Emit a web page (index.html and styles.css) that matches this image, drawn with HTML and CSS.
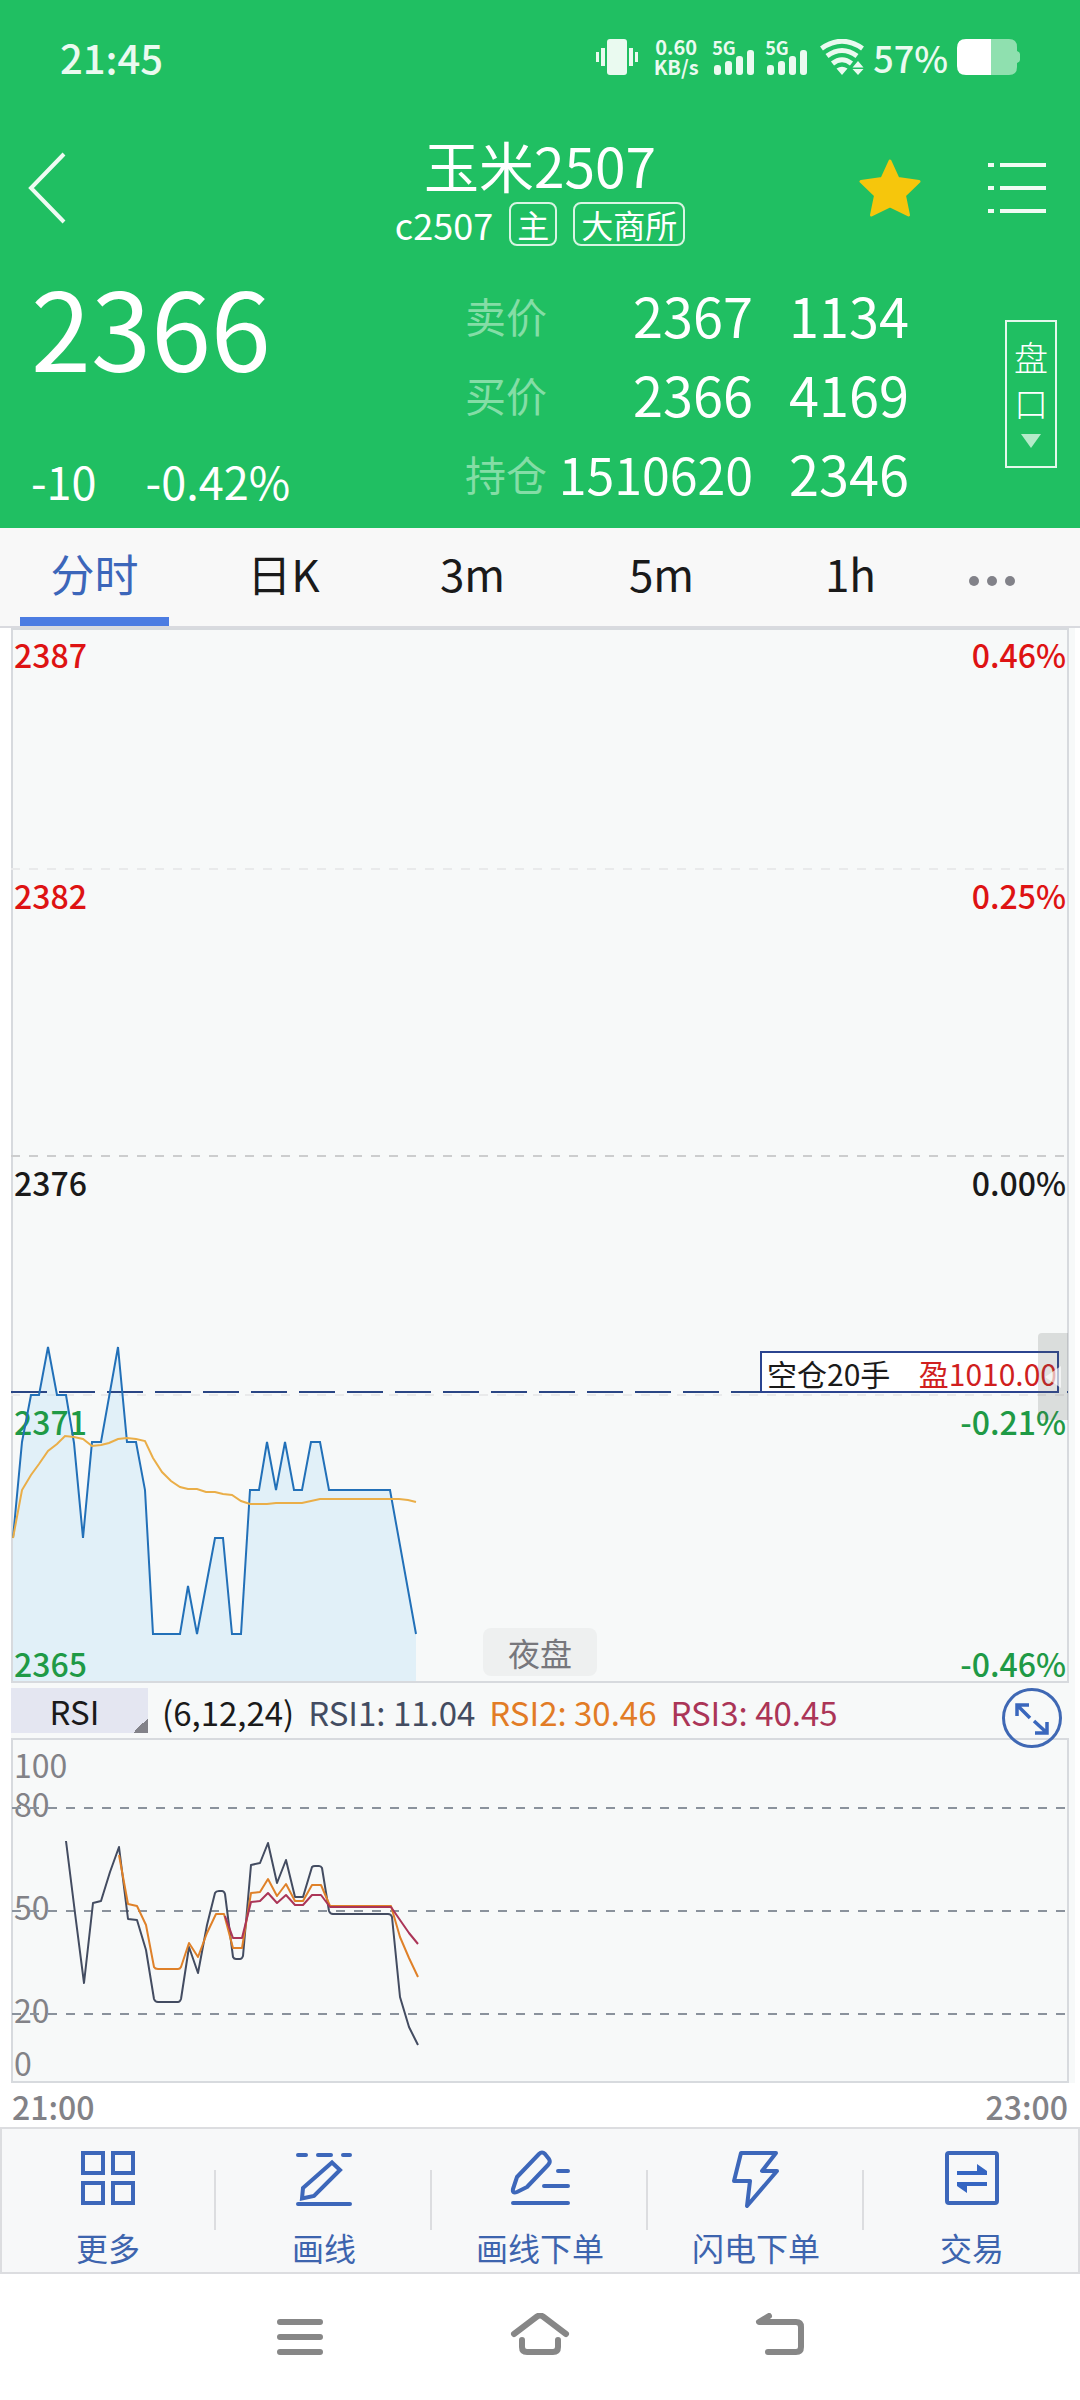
FILE: index.html
```html
<!DOCTYPE html>
<html lang="zh-CN">
<head>
<meta charset="utf-8">
<meta name="viewport" content="width=device-width, initial-scale=1">
<title>玉米2507</title>
<link rel="stylesheet" href="styles.css">
</head>
<body>
<header class="header">
  <div class="status">
    <span class="status-time">21:45</span>
    <svg class="vibrate" width="42" height="36" viewBox="0 0 42 36"><g fill="#eafaf0"><rect x="11" y="0" width="20" height="36" rx="3"/><rect x="0" y="13" width="3" height="10"/><rect x="5" y="9" width="4" height="18"/><rect x="33" y="9" width="4" height="18"/><rect x="39" y="13" width="3" height="10"/></g></svg>
    <span class="speed"><span>0.60</span><span>KB/s</span></span>
    <span class="cell"><span>5G</span><svg width="40" height="25" viewBox="0 0 40 25"><g fill="#eafaf0"><rect x="0" y="15" width="7" height="10" rx="3"/><rect x="11" y="11" width="7" height="14" rx="3"/><rect x="22" y="6" width="7" height="19" rx="3"/><rect x="33" y="0" width="7" height="25" rx="3"/></g></svg></span>
    <span class="cell"><span>5G</span><svg width="40" height="25" viewBox="0 0 40 25"><g fill="#eafaf0"><rect x="0" y="15" width="7" height="10" rx="3"/><rect x="11" y="11" width="7" height="14" rx="3"/><rect x="22" y="6" width="7" height="19" rx="3"/><rect x="33" y="0" width="7" height="25" rx="3"/></g></svg></span>
    <svg class="wifi" width="44" height="36" viewBox="0 0 44 36"><g fill="none" stroke="#eafaf0" stroke-width="5"><path d="M1.500 9.500Q22-5 42.500 9.500"/><path d="M7 17Q22 6 37 17"/><path d="M12.500 24.500Q22 17 31.500 24.500"/></g><path fill="#eafaf0" d="M16.500 29.500Q22 26 27.500 29.500L22 36zM38 22l5.500 6.500h-11zM38 36l5.500-6h-11z"/></svg>
    <span class="battery-text">57%</span>
    <svg class="battery" width="63" height="36" viewBox="0 0 63 36"><path fill="#8fe0af" d="M33 0h19q8 0 8 8v4q3 1 3 3v6q0 2-3 3v4q0 8-8 8H33z"/><path fill="#fff" d="M34 0H9Q0 0 0 9v18q0 9 9 9h25z"/></svg>
  </div>
  <div class="titlebar">
    <button class="icon-btn back" aria-label="返回"><svg width="40" height="72" viewBox="0 0 40 72"><path d="M37 2L4 36L37 70" fill="none" stroke="#effbf3" stroke-width="4"/></svg></button>
    <div class="titles">
      <h1>玉米2507</h1>
      <div class="subtitle"><span>c2507</span><span class="tag">主</span><span class="tag">大商所</span></div>
    </div>
    <div class="title-actions">
      <button class="icon-btn" aria-label="自选"><svg width="62" height="60" viewBox="0 0 62 60"><path fill="#f6c60c" stroke="#f6c60c" stroke-width="3" stroke-linejoin="round" d="M31 3L39 20.500L60 23.500L45.500 37.500L49.500 57L31 48L12.500 57L16.500 37.500L2 23.500L23 20.500z"/></svg></button>
      <button class="icon-btn" aria-label="列表"><svg width="58" height="52" viewBox="0 0 58 52"><path d="M0 3h6M12 3h46M0 26h6M12 26h46M0 49h6M12 49h46" stroke="#effbf3" stroke-width="4"/></svg></button>
    </div>
  </div>
  <div class="quote">
    <div class="last">
      <div class="last-price">2366</div>
      <div class="change"><span>-10</span><span>-0.42%</span></div>
    </div>
    <table class="book">
      <tr><th scope="row">卖价</th><td class="price">2367</td><td>1134</td></tr>
      <tr><th scope="row">买价</th><td class="price">2366</td><td>4169</td></tr>
      <tr><th scope="row">持仓</th><td class="price long">1510620</td><td>2346</td></tr>
    </table>
    <button class="depth"><span>盘</span><span>口</span><svg width="20" height="14" viewBox="0 0 20 14"><path d="M0 0h20L10 14z" fill="#b4ebc9"/></svg></button>
  </div>
</header>

<nav class="tabs">
  <button class="tab active">分时</button>
  <button class="tab">日K</button>
  <button class="tab">3m</button>
  <button class="tab">5m</button>
  <button class="tab">1h</button>
  <button class="tab more" aria-label="更多周期"><svg width="46" height="10" viewBox="0 0 46 10"><g fill="#828289"><circle cx="5" cy="5" r="5"/><circle cx="23" cy="5" r="5"/><circle cx="41" cy="5" r="5"/></g></svg></button>
</nav>

<main class="charts">
  <section class="plot price-plot">
    <svg class="lines" viewBox="0 0 1058 1055" preserveAspectRatio="none">
      <g fill="none" stroke-width="2" stroke-dasharray="9 9">
        <path stroke="#e9eaeb" d="M0 241H1056M0 767H1056"/>
        <path stroke="#cccdce" d="M0 528H1056"/>
      </g>
      <path fill="#b5dcf6" fill-opacity=".32" d="M2 910L11 814L20 767H28L37 719L46 767H55L63 815L72 910L81 814H90L107 719L116 814H125L134 862L142 1006H169L177 958L186 1006L204 910H212L221 1006H230L239 862H248L256 814L265 862L274 814L283 862H291L300 814H309L318 862H379L405 1006V1053H2z"/>
    </svg>
    <div class="levels price-levels">
      <div class="level up"><span>2387</span><span>0.46%</span></div>
      <div class="level up"><span>2382</span><span>0.25%</span></div>
      <div class="level"><span>2376</span><span>0.00%</span></div>
      <div class="level down"><span>2371</span><span>-0.21%</span></div>
      <div class="level down"><span>2365</span><span>-0.46%</span></div>
    </div>
    <svg class="lines" viewBox="0 0 1058 1055" preserveAspectRatio="none">
      <path stroke="#2a4685" stroke-width="2" stroke-dasharray="36 12" d="M0 764H1057"/>
      <path fill="none" stroke="#2270b8" stroke-width="2" d="M2 910L11 814L20 767H28L37 719L46 767H55L63 815L72 910L81 814H90L107 719L116 814H125L134 862L142 1006H169L177 958L186 1006L204 910H212L221 1006H230L239 862H248L256 814L265 862L274 814L283 862H291L300 814H309L318 862H379L405 1006"/>
      <path fill="none" stroke="#eaae48" stroke-width="2" d="M2 910L11 862L20 847L28 836L37 823L46 816L54 808L63 809L72 811L81 818L90 817L98 815L107 811L116 810L125 811L134 813L142 830L151 844L160 853L169 859L177 861H186L195 864H204L212 866L221 867L230 873L239 876H256L265 875H291L309 871H388L397 872L405 874"/>
    </svg>
    <div class="position"><span>空仓20手</span><span class="profit">盈1010.00</span></div>
    <button class="drawer" aria-label="展开"><svg width="16" height="22" viewBox="0 0 16 22"><path d="M16 0v22L0 11z" fill="#fff" fill-opacity=".65"/></svg></button>
    <span class="session">夜盘</span>
  </section>
  <div class="indicator">
    <button class="indicator-name">RSI</button>
    <span>(6,12,24)</span>
    <span class="rsi1">RSI1: 11.04</span>
    <span class="rsi2">RSI2: 30.46</span>
    <span class="rsi3">RSI3: 40.45</span>
    <button class="expand" aria-label="全屏"><svg width="60" height="60" viewBox="0 0 60 60"><circle cx="30" cy="30" r="28.500" fill="none" stroke="#3f68b4" stroke-width="3"/><g fill="none" stroke="#3a67bd" stroke-width="3.500"><path d="M15 28V17H27M16 18L28 30"/><path d="M45 34V45H33M44 44L32 33"/></g></svg></button>
  </div>
  <section class="plot rsi-plot">
    <div class="levels rsi-levels"><span>100</span><span>80</span><span>50</span><span>20</span><span>0</span></div>
    <svg class="lines" viewBox="0 0 1058 345" preserveAspectRatio="none">
      <path stroke="#8a929c" stroke-width="2" stroke-dasharray="9 9" d="M1 70H1055M1 173H1055M1 276H1055"/>
      <g fill="none" stroke-width="2" stroke-linejoin="round">
        <path stroke="#434c61" d="M55 103L64 175L73 245L82 165L90 163L99 134L108 109L117 181L126 182L135 212L143 261Q144 264 147 264H167Q169 264 170 261L178 209L187 235L196 187L204 155Q205 153 208 153H211Q213 153 214 156L222 219Q223 221 225 221H229Q231 221 232 218L240 127L249 125L257 105L266 145L275 122L284 159H292L301 129Q302 128 304 128H308Q310 128 311 130L318 173Q319 176 322 176H377Q380 176 381 179L389 259L398 289L407 307"/>
        <path stroke="#df8129" d="M108 117L117 166L126 168L135 187L143 229Q144 231 147 231H167Q169 231 170 229L178 205L187 219L196 195L205 176H213L222 210H231L240 155L249 154L257 141L266 158L275 146L284 163H292L301 147H310L319 168H380L389 199L398 220L407 239"/>
        <path stroke="#ab3557" d="M214 178L222 200H231L240 164L249 163L257 155L266 165L275 157L284 167H292L301 157H310L319 169H380L389 182L398 195L407 206"/>
      </g>
    </svg>
  </section>
</main>
<div class="times"><span>21:00</span><span>23:00</span></div>

<nav class="toolbar">
  <button class="tool"><svg width="56" height="60" viewBox="0 0 56 60"><path fill="none" stroke="#3d67ba" stroke-width="4" d="M3 5h20v20H3zM33 5h20v20H33zM3 35h20v20H3zM33 35h20v20H33z"/></svg>更多</button>
  <button class="tool"><svg width="60" height="60" viewBox="0 0 60 60"><g fill="none" stroke="#3d67ba" stroke-width="4"><path stroke-linecap="round" d="M4 7h8M24 7h13M49 7h7M4 56h52"/><path d="M38 14.500L46 22L20 48L8 50.500L9 40z"/></g></svg>画线</button>
  <button class="tool"><svg width="60" height="60" viewBox="0 0 60 60"><g fill="none" stroke="#3d67ba" stroke-width="4" stroke-linecap="round" stroke-linejoin="round"><path d="M29 6Q32 3 35 6L39 11Q41 14 38 17L17 39L7 44Q2 46 3 41L7 29z"/><path d="M48 23h10M34 38h24M3 55h55"/></g></svg>画线下单</button>
  <button class="tool"><svg width="60" height="60" viewBox="0 0 60 60"><path fill="none" stroke="#3d67ba" stroke-width="4" stroke-linejoin="round" d="M15 5H50L36 23H51L21 58L24 33H8z"/></svg>闪电下单</button>
  <button class="tool"><svg width="56" height="60" viewBox="0 0 56 60"><rect x="3" y="5" width="50" height="50" rx="2" fill="none" stroke="#3d67ba" stroke-width="4"/><path fill="#3666c2" d="M13 23h20v-7l10 7v4H13zM43 38H23v7l-10-7v-4h30z"/></svg>交易</button>
</nav>

<nav class="sysnav">
  <button class="icon-btn" aria-label="最近任务"><svg width="60" height="48" viewBox="0 0 60 48"><path d="M10 9h40M10 24h40M10 39h40" stroke="#878787" stroke-width="6" stroke-linecap="round"/></svg></button>
  <button class="icon-btn" aria-label="主页"><svg width="60" height="48" viewBox="0 0 60 48"><path d="M4 21L27 3.500Q30 1.500 33 3.500L56 21M12 27v7q0 5 5 5h26q5 0 5-5v-7" fill="none" stroke="#878787" stroke-width="6" stroke-linecap="round"/></svg></button>
  <button class="icon-btn" aria-label="返回"><svg width="60" height="48" viewBox="0 0 60 48"><path d="M19 3L9 9H46q5 0 5 5v20q0 5-5 5H18" fill="none" stroke="#878787" stroke-width="6" stroke-linecap="round" stroke-linejoin="round"/></svg></button>
</nav>
</body>
</html>
```
FILE: styles.css
```css
* { box-sizing: border-box; }
body {
  margin: 0;
  background: #fff;
  color: #1a1a1a;
  font-family: "Noto Sans CJK SC", "Noto Sans", sans-serif;
}
button {
  margin: 0;
  padding: 0;
  border: 0;
  background: none;
  color: inherit;
  font: inherit;
}
svg { display: block; flex: none; }

.header {
  height: 528px;
  background: #20bf62;
  color: #fff;
}
.status {
  display: flex;
  align-items: center;
  height: 76px;
  margin-right: 60px;
  padding: 38px 0 0 60px;
  color: #eafaf0;
  font-weight: 500;
  line-height: 36px;
}
.status-time { margin-right: auto; font-size: 40px; }
.speed {
  display: flex;
  flex-direction: column;
  align-items: center;
  width: 48px;
  margin: 0 14px;
  font-size: 20px;
  font-weight: 700;
  line-height: 20px;
}
.cell {
  position: relative;
  display: flex;
  align-items: flex-end;
  height: 36px;
  margin-right: 13px;
}
.cell span {
  position: absolute;
  left: -2px;
  top: 0;
  font-size: 18px;
  font-weight: 700;
  line-height: 16px;
}
.battery-text { margin: 0 9px; font-size: 36px; }

.titlebar {
  display: grid;
  grid-template-columns: 1fr auto 1fr;
  align-items: center;
  margin-top: 53px;
  padding: 0 27px;
}
.icon-btn { display: block; }
.titles { text-align: center; }
h1 {
  margin: 0;
  font-size: 55px;
  font-weight: 400;
  line-height: 70px;
}
.subtitle {
  display: flex;
  justify-content: center;
  gap: 16px;
  margin-top: 3px;
  font-size: 36px;
  line-height: 44px;
}
.tag {
  padding: 0 6px;
  border: 2px solid #d8f5e3;
  border-radius: 8px;
  font-size: 32px;
  line-height: 40px;
}
.title-actions {
  display: flex;
  justify-content: flex-end;
  align-items: center;
  gap: 67px;
  padding-right: 7px;
}

.quote {
  display: flex;
  align-items: flex-start;
  margin-top: 29px;
  padding: 0 23px 0 31px;
}
.last { flex: 1; }
.last-price {
  margin-top: -4px;
  font-size: 108px;
  line-height: 108px;
}
.change {
  display: flex;
  gap: 49px;
  margin-top: 76px;
  font-size: 45px;
  line-height: 52px;
}
.book { border-spacing: 0; }
.book tr { height: 79px; }
.book th, .book td { padding: 0; line-height: 60px; }
.book th {
  color: #84dda6;
  font-size: 41px;
  font-weight: 400;
}
.book td { width: 252px; padding-left: 36px; font-size: 54px; }
.book .price { width: 206px; padding: 0; text-align: right; }
.book .long { font-size: 50px; }
.depth {
  display: flex;
  flex-direction: column;
  align-items: center;
  width: 52px;
  height: 148px;
  margin-top: 45px;
  padding-top: 12px;
  border: 2px solid #e4f8ec;
  font-size: 34px;
  font-weight: 300;
  line-height: 46px;
}
.depth svg { margin-top: 8px; }

.tabs {
  display: grid;
  grid-template-columns: repeat(5, 189fr) 93fr;
  height: 100px;
  padding-right: 42px;
  border-bottom: 2px solid #d9dadf;
  background: #f8f8f8;
}
.tab {
  position: relative;
  padding-bottom: 8px;
  font-size: 44px;
}
.tab.active { color: #3c66ba; }
.tab.active::after {
  content: "";
  position: absolute;
  left: 20px;
  right: 20px;
  bottom: 0;
  height: 9px;
  background: #4c7ce2;
}
.tab.more { padding: 8px 0 0; display: grid; place-items: center; }

.charts {
  margin: 0 5px 0 11px;
  padding-right: 6px;
  background: #f7f9f9;
}
.plot { position: relative; box-shadow: inset 0 0 0 2px #d7dade; }
.lines {
  position: absolute;
  inset: 0;
  width: 100%;
  height: 100%;
}
.levels { position: relative; display: grid; line-height: 36px; }
.price-levels {
  grid-template-rows: 241px 287px 239px 242px 36px;
  padding: 8px 3px 0 3px;
  height: 1055px;
  font-size: 32px;
  font-weight: 500;
}
.level { display: flex; justify-content: space-between; }
.up { color: #de1313; }
.down { color: #1f9a46; }
.position {
  position: absolute;
  right: 10px;
  top: 723px;
  display: flex;
  justify-content: space-between;
  width: 299px;
  height: 42px;
  padding: 0 0 0 5px;
  border: 2px solid #2b4490;
  background: #fff;
  font-size: 30px;
  line-height: 40px;
}
.profit { color: #d01f1f; }
.drawer {
  position: absolute;
  right: 1px;
  top: 705px;
  display: grid;
  place-items: center;
  width: 30px;
  height: 87px;
  border-radius: 4px 0 0 0;
  background: rgba(90, 92, 90, .18);
}
.session {
  position: absolute;
  left: 50%;
  bottom: 7px;
  width: 114px;
  margin-left: -57px;
  border-radius: 8px;
  background: #eef0f0;
  color: #77777c;
  font-size: 32px;
  line-height: 48px;
  text-align: center;
}

.indicator {
  position: relative;
  z-index: 1;
  display: flex;
  align-items: center;
  gap: 14px;
  height: 55px;
  font-size: 33px;
  line-height: 45px;
}
.indicator > span { padding-top: 3px; }
.indicator-name {
  width: 137px;
  padding: 2px 10px 0 0;
  line-height: 43px;
  background: linear-gradient(135deg, transparent 50%, #828289 50%) right bottom / 15px 15px no-repeat #e4e6f1;
}
.rsi1 { color: #434c61; }
.rsi2 { color: #e27c26; }
.rsi3 { color: #ab3557; }
.expand {
  position: absolute;
  right: 7px;
  top: 5px;
}
.rsi-levels {
  grid-template-rows: 39px 103px 103px 53px 36px;
  height: 345px;
  padding: 8px 0 0 3px;
  color: #828287;
  font-size: 32px;
}

.times {
  display: flex;
  justify-content: space-between;
  padding: 2px 12px 0;
  color: #828287;
  font-size: 32px;
  font-weight: 500;
  line-height: 42px;
}

.toolbar {
  display: grid;
  grid-template-columns: repeat(5, 1fr);
  height: 147px;
  box-shadow: inset 0 0 0 2px #dcdde0;
  background: #f7f8f9;
  color: #3d64ae;
  font-size: 32px;
  line-height: 40px;
}
.tool {
  display: flex;
  flex-direction: column;
  align-items: center;
  gap: 19px;
  padding-top: 21px;
  background: linear-gradient(#dcdde0, #dcdde0) right 43px / 2px 60px no-repeat;
}
.tool:last-child { background: none; }

.sysnav {
  display: flex;
  justify-content: center;
  gap: 180px;
  height: 126px;
  padding-top: 39px;
}
.sysnav .icon-btn { height: 48px; }
```
